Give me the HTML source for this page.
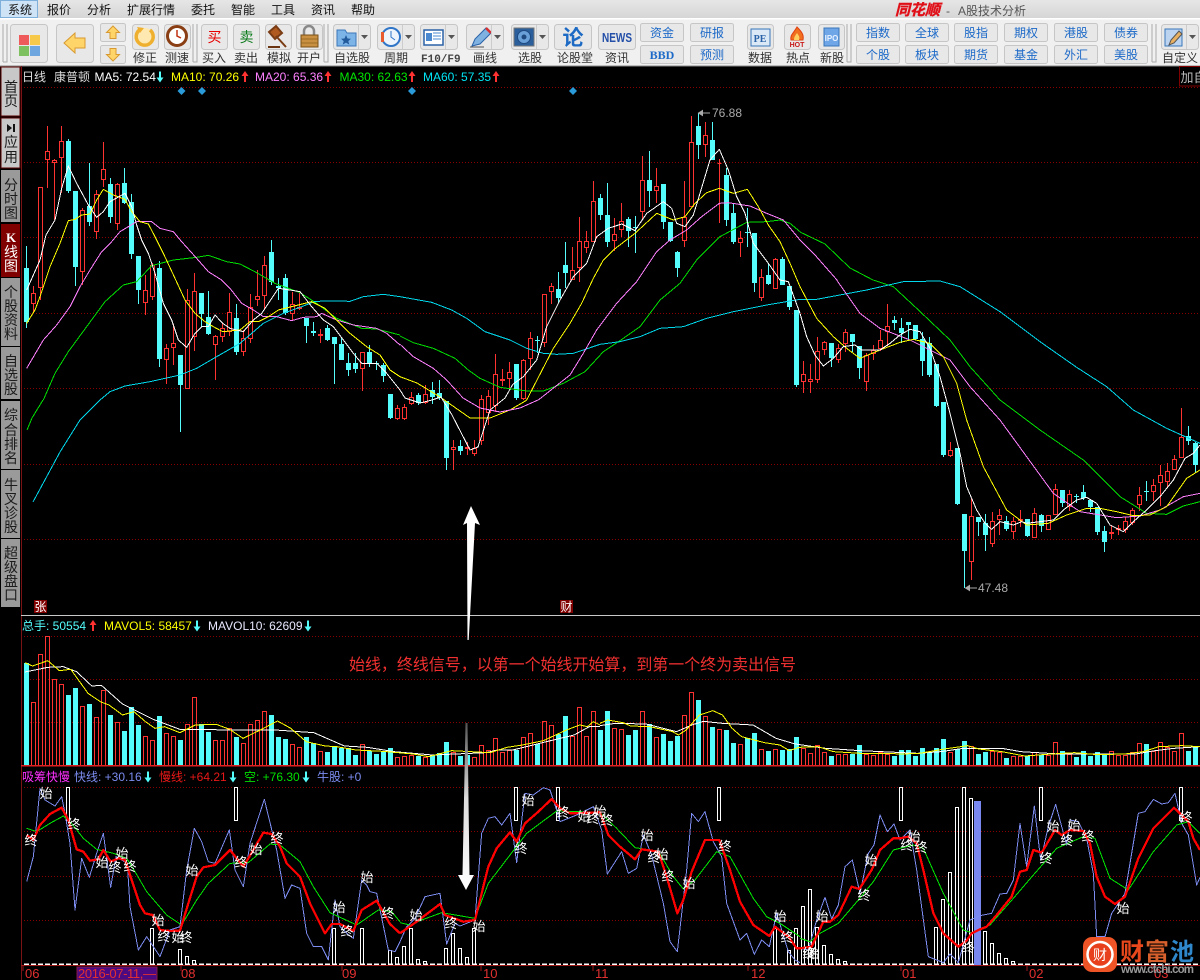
<!DOCTYPE html>
<html lang="zh"><head><meta charset="utf-8"><title>A股技术分析</title>
<style>
html,body{margin:0;padding:0;background:#000;width:1200px;height:980px;overflow:hidden}
svg{display:block;font-family:"Liberation Sans","WenQuanYi Zen Hei","Noto Sans CJK SC",sans-serif;font-size:12px}
polyline{fill:none;vector-effect:non-scaling-stroke;stroke-width:1;stroke-linejoin:round;shape-rendering:crispEdges}
.b{fill:#e8e8e8;stroke:#c6c6c6}
.m{fill:#111}
.l{fill:#333}
.t{fill:#1c69c8;text-anchor:middle}
.s{fill:#1c1c1c;font-size:14px;text-anchor:middle}
.g{stroke:#8a0000;stroke-dasharray:1 2;fill:none}
.w{fill:#fff;font-size:13px;text-anchor:middle}
.x{fill:#e23030;font-size:13px}
.sep{fill:none;stroke:#aaa}
</style></head><body>
<svg width="1200" height="980" viewBox="0 0 1200 980" xmlns="http://www.w3.org/2000/svg">
<defs>
<linearGradient id="mb" x1="0" y1="0" x2="0" y2="1"><stop offset="0" stop-color="#e6e6e6"/><stop offset="1" stop-color="#d6d6d6"/></linearGradient>
<linearGradient id="ar" x1="0" y1="0" x2="0" y2="1"><stop offset="0" stop-color="#555"/><stop offset=".45" stop-color="#ddd"/><stop offset="1" stop-color="#fff"/></linearGradient>
</defs>
<rect width="1200" height="980" fill="#000"/>
<!-- menu -->
<rect width="1200" height="18" fill="url(#mb)"/>
<rect y="18" width="1200" height="1.5" fill="#fff"/>
<rect y="19.5" width="1200" height="47" fill="#f0f0f0"/>
<rect y="65.5" width="1200" height="1" fill="#888"/>
<rect x=".5" y=".5" width="37" height="17" fill="#cfe3f6" stroke="#7fb0dc"/>
<g class="m">
<text class="m" x="8" y="14">系统</text><text class="m" x="47" y="14">报价</text><text class="m" x="87" y="14">分析</text><text class="m" x="127" y="14">扩展行情</text><text class="m" x="191" y="14">委托</text><text class="m" x="231" y="14">智能</text><text class="m" x="271" y="14">工具</text><text class="m" x="311" y="14">资讯</text><text class="m" x="351" y="14">帮助</text>
</g>
<text x="895" y="15" font-size="15" font-weight="bold" font-style="italic" fill="#e01018" stroke="#e01018" stroke-width=".4">同花顺</text>
<text x="946" y="15" fill="#555">-</text><text x="958" y="15" fill="#555">A股技术分析</text>
<!-- separators -->
<path class="sep" d="M3 24V62M7 24V62H3M193 24V62M197 24V62H193M324 24V62M328 24V62H324M847 24V62M851 24V62H847M1152 24V62M1156 24V62H1152"/>
<!-- toolbar buttons -->
<rect class="b" x="10.5" y="24.5" width="37" height="38" rx="3"/><rect x="19" y="35" width="10" height="10" fill="#ef5a5a"/><rect x="30" y="35" width="10" height="10" fill="#f7c94a"/><rect x="19" y="46" width="10" height="10" fill="#7cc060"/><rect x="30" y="46" width="10" height="10" fill="#6ea6e0"/>
<rect class="b" x="56.5" y="24.5" width="37" height="38" rx="3"/><path d="M64 43L75 33V38H85V48H75V53Z" fill="#ffd468" stroke="#d89a30"/>
<rect class="b" x="100.5" y="23.5" width="25" height="18" rx="2"/><path d="M113 26l6.500 6.500h-3.500v6h-6v-6h-3.500z" fill="#ffd468" stroke="#d89a30"/>
<rect class="b" x="100.500" y="45.500" width="25" height="18" rx="2"/><path d="M113 61l6.500-6.500h-3.500v-6h-6v6h-3.500z" fill="#ffd468" stroke="#d89a30"/>
<rect class="b" x="132.500" y="24.500" width="26" height="25" rx="3"/><circle cx="145" cy="37" r="9" fill="#ffe9b0"/><path d="M141 29a8.500 8.500 0 1 0 9 1" fill="none" stroke="#efb030" stroke-width="3.500"/><path d="M137 27l7 1-4 5z" fill="#efb030"/>
<text class="l" x="133" y="62">修正</text>
<rect class="b" x="164.500" y="24.500" width="26" height="25" rx="3"/><circle cx="177" cy="36" r="9.500" fill="#fff" stroke="#8a3e14" stroke-width="3"/><path d="M177 30v6l4 2" fill="none" stroke="#c03010" stroke-width="1.500"/>
<text class="l" x="165" y="62">测速</text>
<rect class="b" x="201.500" y="24.500" width="26" height="25" rx="3"/><text x="214.500" y="42" font-size="14" fill="#e80000" text-anchor="middle">买</text>
<text class="l" x="202" y="62">买入</text>
<rect class="b" x="233.500" y="24.500" width="26" height="25" rx="3"/><text x="246.500" y="42" font-size="14" fill="#0a7a1a" text-anchor="middle">卖</text>
<text class="l" x="234" y="62">卖出</text>
<rect class="b" x="265.500" y="24.500" width="26" height="25" rx="3"/><path d="M269 32l7-6 6 7-7 6zM276 36l10 11" fill="#b05a20" stroke="#7a3c14" stroke-width="2"/><path d="M268 47h12" stroke="#6a3410" stroke-width="2"/>
<text class="l" x="267" y="62">模拟</text>
<rect class="b" x="296.500" y="24.500" width="26" height="25" rx="3"/><path d="M304 35v-4a5 5 0 0 1 10 0v4" fill="none" stroke="#888" stroke-width="2.500"/><rect x="301" y="35" width="17" height="12" fill="#c89040" stroke="#7a5018"/><path d="M301 39h17M301 43h17" stroke="#8a6020" stroke-width=".7"/>
<text class="l" x="297" y="62">开户</text>
<rect class="b" x="333.500" y="24.500" width="37" height="25" rx="3"/><path d="M337 30h8l2 3h9v13h-19z" fill="#7db4e8" stroke="#3a76b8"/><path d="M346 35l1.500 3.500 3.500.3-2.700 2.300 1 3.500-3.300-2-3.300 2 1-3.500-2.700-2.300 3.500-.3z" fill="#235a9c"/><path d="M358.500 25v24" stroke="#ccc"/><path d="M361 35h7l-3.500 4z" fill="#555"/>
<text class="l" x="334" y="62">自选股</text>
<rect class="b" x="377.500" y="24.500" width="37" height="25" rx="3"/><circle cx="391" cy="37" r="9" fill="#eef4fc" stroke="#2f75c8" stroke-width="2"/><path d="M391 31v6l4 3" fill="none" stroke="#2f75c8"/><rect x="381" y="32" width="3" height="10" fill="#e85a30"/><path d="M402.500 25v24" stroke="#ccc"/><path d="M405 35h7l-3.500 4z" fill="#555"/>
<text class="l" x="384" y="62">周期</text>
<rect class="b" x="420.500" y="24.500" width="37" height="25" rx="3"/><rect x="424" y="30" width="19" height="15" fill="#fff" stroke="#2a62a8" stroke-width="1.500"/><rect x="426" y="33" width="6" height="8" fill="#4a88d0"/><path d="M433 33h8M433 36h8M433 39h8" stroke="#4a88d0"/><path d="M445.500 25v24" stroke="#ccc"/><path d="M448 35h7l-3.500 4z" fill="#555"/>
<text x="421" y="62" font-family="'Liberation Mono',monospace" font-weight="bold" font-size="11" fill="#444">F10/F9</text>
<rect class="b" x="466.500" y="24.500" width="37" height="25" rx="3"/><path d="M472 46l3-7 11-11 5 5-11 11z" fill="#7fb2e0" stroke="#2a62a8"/><path d="M486 28l5 5" stroke="#d83030" stroke-width="2.500"/><path d="M470 47h14" stroke="#555"/><path d="M491.500 25v24" stroke="#ccc"/><path d="M494 35h7l-3.500 4z" fill="#555"/>
<text class="l" x="473" y="62">画线</text>
<rect class="b" x="511.500" y="24.500" width="37" height="25" rx="3"/><rect x="514" y="28" width="20" height="18" fill="#2a5f9c" stroke="#777"/><circle cx="524" cy="37" r="6.500" fill="#6aa0d8" stroke="#1f4a80"/><circle cx="524" cy="37" r="2.500" fill="#1f4a80"/><path d="M536.500 25v24" stroke="#ccc"/><path d="M539 35h7l-3.500 4z" fill="#555"/>
<text class="l" x="518" y="62">选股</text>
<rect class="b" x="554.500" y="24.500" width="37" height="25" rx="3"/><text x="573" y="45" font-size="21" font-weight="bold" fill="#1c6ac4" text-anchor="middle">论</text>
<text class="l" x="557" y="62">论股堂</text>
<rect class="b" x="598.500" y="24.500" width="37" height="25" rx="3"/><text x="617" y="42" font-size="13" font-weight="bold" fill="#234fa8" text-anchor="middle" textLength="30" lengthAdjust="spacingAndGlyphs">NEWS</text>
<text class="l" x="605" y="62">资讯</text>
<rect class="b" x="640.500" y="23.500" width="43" height="18" rx="2"/><text class="t" x="662" y="37">资金</text>
<rect class="b" x="640.500" y="45.500" width="43" height="18" rx="2"/><text class="t" x="662" y="59" font-family="'Liberation Serif',serif" font-weight="bold">BBD</text>
<rect class="b" x="690.500" y="23.500" width="43" height="18" rx="2"/><text class="t" x="712" y="37">研报</text>
<rect class="b" x="690.500" y="45.500" width="43" height="18" rx="2"/><text class="t" x="712" y="59">预测</text>
<rect class="b" x="747.500" y="24.500" width="26" height="25" rx="3"/><rect x="751" y="29" width="19" height="17" fill="#dbe8f6" stroke="#3a76b8"/><text x="760" y="42" font-size="10" font-weight="bold" font-family="'Liberation Serif',serif" fill="#2a62a8" text-anchor="middle">PE</text>
<text class="l" x="748" y="62">数据</text>
<rect class="b" x="784.500" y="24.500" width="26" height="25" rx="3"/><path d="M797 27c5 5 7 8 6 13h-12c-1-5 2-6 6-13z" fill="#f07020" stroke="#e04010"/><path d="M797 33c2 3 3 4 2 7h-5c0-3 1-4 3-7z" fill="#ffd060"/><text x="797" y="47" font-size="7" font-weight="bold" fill="#c81818" text-anchor="middle">HOT</text>
<text class="l" x="786" y="62">热点</text>
<rect class="b" x="818.500" y="24.500" width="26" height="25" rx="3"/><rect x="824" y="28" width="15" height="18" fill="#6ea6e8" stroke="#3a76b8"/><text x="831.500" y="41" font-size="8" font-weight="bold" fill="#e8f2ff" text-anchor="middle">IPO</text>
<text class="l" x="820" y="62">新股</text>
<rect class="b" x="856.500" y="23.500" width="43" height="18" rx="2"/><text class="t" x="878" y="37">指数</text><rect class="b" x="856.500" y="45.500" width="43" height="18" rx="2"/><text class="t" x="878" y="59">个股</text>
<rect class="b" x="905.500" y="23.500" width="43" height="18" rx="2"/><text class="t" x="927" y="37">全球</text><rect class="b" x="905.500" y="45.500" width="43" height="18" rx="2"/><text class="t" x="927" y="59">板块</text>
<rect class="b" x="954.500" y="23.500" width="43" height="18" rx="2"/><text class="t" x="976" y="37">股指</text><rect class="b" x="954.500" y="45.500" width="43" height="18" rx="2"/><text class="t" x="976" y="59">期货</text>
<rect class="b" x="1004.500" y="23.500" width="43" height="18" rx="2"/><text class="t" x="1026" y="37">期权</text><rect class="b" x="1004.500" y="45.500" width="43" height="18" rx="2"/><text class="t" x="1026" y="59">基金</text>
<rect class="b" x="1054.500" y="23.500" width="43" height="18" rx="2"/><text class="t" x="1076" y="37">港股</text><rect class="b" x="1054.500" y="45.500" width="43" height="18" rx="2"/><text class="t" x="1076" y="59">外汇</text>
<rect class="b" x="1104.500" y="23.500" width="43" height="18" rx="2"/><text class="t" x="1126" y="37">债券</text><rect class="b" x="1104.500" y="45.500" width="43" height="18" rx="2"/><text class="t" x="1126" y="59">美股</text>
<rect class="b" x="1161.500" y="24.500" width="37" height="25" rx="3"/><rect x="1165" y="29" width="17" height="17" fill="#bcd4f0" stroke="#3a76b8"/><path d="M1169 45l2-5 8-9 3 3-8 9z" fill="#e8b060" stroke="#555"/><path d="M1186.500 25v24" stroke="#ccc"/><path d="M1189 35h7l-3.500 4z" fill="#555"/>
<text class="l" x="1162" y="62">自定义</text>
<!-- sidebar -->
<rect x="21" y="66" width="1" height="914" fill="#7a1414"/>
<g stroke="#5a0000">
<rect x="1" y="67" width="19" height="49" fill="#c8c8c8"/><rect x="1" y="118" width="19" height="50" fill="#c8c8c8"/></g>
<rect x="1" y="170" width="19" height="52" fill="#9a9a9a"/>
<rect x="1" y="224" width="19" height="53" fill="#800000"/>
<rect x="1" y="278" width="19" height="68" fill="#9a9a9a"/>
<rect x="1" y="347" width="19" height="52" fill="#9a9a9a"/>
<rect x="1" y="401" width="19" height="68" fill="#9a9a9a"/>
<rect x="1" y="470" width="19" height="68" fill="#9a9a9a"/>
<rect x="1" y="539" width="19" height="68" fill="#9a9a9a"/>
<text class="s" x="11" y="92">首</text><text class="s" x="11" y="106">页</text>
<path d="M7 124l5 4-5 4zM13 124h2v8h-2z" fill="#111"/>
<text class="s" x="11" y="147">应</text><text class="s" x="11" y="162">用</text>
<text class="s" x="11" y="190">分</text><text class="s" x="11" y="204">时</text><text class="s" x="11" y="218">图</text>
<text x="11" y="242" fill="#fff" font-size="13" font-weight="bold" font-family="'Liberation Serif',serif" text-anchor="middle">K</text><text class="s" style="fill:#fff" x="11" y="257">线</text><text class="s" style="fill:#fff" x="11" y="271">图</text>
<text class="s" x="11" y="297">个</text><text class="s" x="11" y="311">股</text><text class="s" x="11" y="325">资</text><text class="s" x="11" y="339">料</text>
<text class="s" x="11" y="366">自</text><text class="s" x="11" y="380">选</text><text class="s" x="11" y="394">股</text>
<text class="s" x="11" y="420">综</text><text class="s" x="11" y="435">合</text><text class="s" x="11" y="449">排</text><text class="s" x="11" y="463">名</text>
<text class="s" x="11" y="490">牛</text><text class="s" x="11" y="504">叉</text><text class="s" x="11" y="518">诊</text><text class="s" x="11" y="532">股</text>
<text class="s" x="11" y="558">超</text><text class="s" x="11" y="572">级</text><text class="s" x="11" y="586">盘</text><text class="s" x="11" y="600">口</text>
<!-- grid -->
<path class="g" d="M24 87.500H1200M24 162.500H1200M24 237.500H1200M24 313.500H1200M24 388.500H1200M24 464.500H1200M24 539.500H1200M24 636.500H1200M24 679.500H1200M24 722.500H1200M24 787.500H1200M24 831.500H1200M24 876.500H1200M24 920.500H1200"/>
<!-- K legend -->
<text x="22" y="81" fill="#ddd">日线</text><text x="54" y="81" fill="#ddd">康普顿</text>
<text x="94.500" y="81" fill="#fff">MA5: 72.54</text><text x="171" y="81" fill="#ffff00">MA10: 70.26</text><text x="255" y="81" fill="#ff80ff">MA20: 65.36</text><text x="339.500" y="81" fill="#00e800">MA30: 62.63</text><text x="423" y="81" fill="#00e4f4">MA60: 57.35</text>
<path d="M160 82.500l3.500-5h-2.500v-6h-2v6h-2.500z" fill="#54fcfc"/>
<path d="M245 71l3.500 5h-2.500v6h-2v-6h-2.500zM328 71l3.500 5h-2.500v6h-2v-6h-2.500zM412 71l3.500 5h-2.500v6h-2v-6h-2.500zM496 71l3.500 5h-2.500v6h-2v-6h-2.500z" fill="#ff3232"/>
<path d="M181.500 87l4 4-4 4-4-4zM202 87l4 4-4 4-4-4zM412 87l4 4-4 4-4-4zM573 87l4 4-4 4-4-4z" fill="#2a9ad8"/>
<rect x="1179.500" y="66.500" width="30" height="19.500" fill="#000" stroke="#800000"/><text x="1180.500" y="82" fill="#bbb" font-size="13">加自</text>
<!-- wicks -->
<g shape-rendering="crispEdges">
<path stroke="#54fcfc" fill="none" d="M26.500 246V328M68.500 139V193M75.500 191V286M89.500 163V226M110.500 178V223M124.500 168V204M131.500 194V259M138.500 256V304M159.500 261V367M180.500 355V432M201.500 293V327M208.500 291V335M236.500 304V355M271.500 240V285M278.500 278V300M285.500 274V315M306.500 318V343M313.500 322V336M327.500 325V341M334.500 337V384M341.500 337V360M348.500 353V376M355.500 353V373M369.500 345V367M376.500 361V370M383.500 363V382M390.500 394V419M418.500 393V405M432.500 382V404M439.500 380V400M446.500 401V470M460.500 440V455M516.500 364V400M537.500 336V353M558.500 272V303M565.500 242V288M600.500 194V220M607.500 183V247M628.500 217V247M635.500 216V253M649.500 151V207M663.500 184V229M670.500 222V242M677.500 251V277M698.500 113V159M712.500 122V160M726.500 168V226M733.500 203V244M747.500 208V247M754.500 233V292M768.500 263V285M782.500 257V285M789.500 286V310M796.500 310V387M831.500 343V367M852.500 334V352M859.500 346V379M894.500 316V330M901.500 318V343M908.500 322V339M915.500 325V340M922.500 332V376M929.500 337V377M936.500 364V407M943.500 402V457M957.500 448V505M964.500 514V588M978.500 517V536M985.500 514V551M1006.500 516V531M1027.500 519V537M1041.500 514V532M1062.500 490V507M1076.500 494V503M1083.500 485V500M1090.500 500V512M1097.500 507V535M1104.500 526V552M1146.500 481V501M1188.500 426V445M1195.500 442V473"/>
<path fill="#54fcfc" d="M24 268h5V322h-5zM66 141h5V191h-5zM73 191h5V267h-5zM87 206h5V222h-5zM108 184h5V217h-5zM122 183h5V203h-5zM129 202h5V254h-5zM136 256h5V290h-5zM157 268h5V359h-5zM178 355h5V385h-5zM199 293h5V314h-5zM206 317h5V334h-5zM234 318h5V352h-5zM269 252h5V282h-5zM276 286h5V288h-5zM283 278h5V313h-5zM304 318h5V326h-5zM311 331h5V333h-5zM325 328h5V340h-5zM332 337h5V344h-5zM339 344h5V360h-5zM346 363h5V370h-5zM353 363h5V369h-5zM367 352h5V363h-5zM374 363h5V364h-5zM381 365h5V376h-5zM388 394h5V418h-5zM416 395h5V403h-5zM430 390h5V397h-5zM437 393h5V398h-5zM444 401h5V458h-5zM458 446h5V451h-5zM514 364h5V398h-5zM535 340h5V341h-5zM556 289h5V298h-5zM563 265h5V273h-5zM598 198h5V215h-5zM605 215h5V242h-5zM626 219h5V231h-5zM633 227h5V228h-5zM647 180h5V191h-5zM661 184h5V222h-5zM668 222h5V241h-5zM675 252h5V268h-5zM696 126h5V145h-5zM710 140h5V160h-5zM724 175h5V220h-5zM731 213h5V242h-5zM745 232h5V233h-5zM752 233h5V283h-5zM766 275h5V284h-5zM780 259h5V285h-5zM787 286h5V307h-5zM794 310h5V385h-5zM829 343h5V358h-5zM850 334h5V342h-5zM857 346h5V368h-5zM892 320h5V323h-5zM899 328h5V333h-5zM906 322h5V325h-5zM913 325h5V339h-5zM920 339h5V361h-5zM927 343h5V375h-5zM934 364h5V406h-5zM941 402h5V455h-5zM955 448h5V504h-5zM962 514h5V551h-5zM976 517h5V522h-5zM983 523h5V535h-5zM1004 521h5V529h-5zM1025 519h5V536h-5zM1039 515h5V526h-5zM1060 490h5V503h-5zM1074 496h5V497h-5zM1081 492h5V498h-5zM1088 500h5V507h-5zM1095 507h5V532h-5zM1102 531h5V542h-5zM1144 491h5V492h-5zM1186 436h5V441h-5zM1193 443h5V465h-5z"/>
<path stroke="#ff3232" fill="none" d="M33.500 286V313M40.500 187V300M47.500 126V188M54.500 159V220M61.500 126V193M82.500 208V285M96.500 190V239M103.500 142V187M117.500 183V230M145.500 275V315M152.500 263V300M166.500 344V384M173.500 324V365M187.500 289V388M194.500 273V351M215.500 335V380M222.500 323V342M229.500 293V336M243.500 330V356M250.500 294V343M257.500 270V306M264.500 256V310M292.500 292V320M299.500 293V310M320.500 329V343M362.500 352V391M397.500 405V420M404.500 404V420M411.500 392V405M425.500 385V404M453.500 440V470M467.500 442V455M474.500 440V456M481.500 395V445M488.500 390V425M495.500 354V412M502.500 369V386M509.500 362V390M523.500 359V400M530.500 332V370M544.500 294V347M551.500 283V304M572.500 247V280M579.500 217V282M586.500 231V253M593.500 181V241M614.500 218V251M621.500 203V237M642.500 156V220M656.500 168V203M684.500 181V247M691.500 116V207M705.500 122V157M719.500 159V223M740.500 231V257M761.500 269V301M775.500 258V288M803.500 361V393M810.500 364V393M817.500 337V383M824.500 341V355M838.500 344V363M845.500 329V352M866.500 353V391M873.500 345V360M880.500 330V351M887.500 304V346M950.500 442V457M971.500 498V580M992.500 512V547M999.500 509V535M1013.500 517V539M1020.500 510V527M1034.500 508V537M1048.500 515V530M1055.500 484V515M1069.500 490V511M1111.500 525V539M1118.500 525V535M1125.500 517V533M1132.500 508V525M1139.500 487V511M1153.500 479V501M1160.500 465V506M1167.500 463V487M1174.500 455V470M1181.500 408V458"/>
<path stroke="#ff3232" fill="#000" d="M31.500 293.500h4V303.500h-4zM38.500 187.500h4V287.500h-4zM45.500 151.500h4V159.500h-4zM52.500 160.500h4V162.500h-4zM59.500 141.500h4V157.500h-4zM80.500 210.500h4V271.500h-4zM94.500 194.500h4V231.500h-4zM101.500 169.500h4V179.500h-4zM115.500 184.500h4V223.500h-4zM143.500 290.500h4V302.500h-4zM150.500 265.500h4V296.500h-4zM164.500 348.500h4V359.500h-4zM171.500 343.500h4V347.500h-4zM185.500 300.500h4V388.500h-4zM192.500 291.500h4V336.500h-4zM213.500 336.500h4V344.500h-4zM220.500 328.500h4V336.500h-4zM227.500 312.500h4V331.500h-4zM241.500 338.500h4V351.500h-4zM248.500 307.500h4V338.500h-4zM255.500 296.500h4V299.500h-4zM262.500 265.500h4V295.500h-4zM290.500 304.500h4V313.500h-4zM297.500 307.500h4V308.500h-4zM318.500 334.500h4V335.500h-4zM360.500 352.500h4V368.500h-4zM395.500 408.500h4V418.500h-4zM402.500 407.500h4V418.500h-4zM409.500 397.500h4V403.500h-4zM423.500 394.500h4V402.500h-4zM451.500 447.500h4V449.500h-4zM465.500 447.500h4V448.500h-4zM472.500 448.500h4V453.500h-4zM479.500 399.500h4V440.500h-4zM486.500 396.500h4V412.500h-4zM493.500 374.500h4V405.500h-4zM500.500 379.500h4V380.500h-4zM507.500 372.500h4V378.500h-4zM521.500 360.500h4V398.500h-4zM528.500 338.500h4V358.500h-4zM542.500 294.500h4V342.500h-4zM549.500 286.500h4V291.500h-4zM570.500 270.500h4V279.500h-4zM577.500 241.500h4V267.500h-4zM584.500 241.500h4V247.500h-4zM591.500 201.500h4V241.500h-4zM612.500 234.500h4V240.500h-4zM619.500 221.500h4V229.500h-4zM640.500 180.500h4V211.500h-4zM654.500 186.500h4V190.500h-4zM682.500 217.500h4V240.500h-4zM689.500 142.500h4V206.500h-4zM703.500 135.500h4V144.500h-4zM717.500 163.500h4V163.500h-4zM738.500 238.500h4V242.500h-4zM759.500 277.500h4V297.500h-4zM773.500 259.500h4V288.500h-4zM801.500 374.500h4V381.500h-4zM808.500 379.500h4V381.500h-4zM815.500 351.500h4V379.500h-4zM822.500 342.500h4V349.500h-4zM836.500 348.500h4V359.500h-4zM843.500 332.500h4V343.500h-4zM864.500 355.500h4V381.500h-4zM871.500 350.500h4V353.500h-4zM878.500 340.500h4V348.500h-4zM885.500 326.500h4V331.500h-4zM948.500 450.500h4V455.500h-4zM969.500 516.500h4V561.500h-4zM990.500 521.500h4V543.500h-4zM997.500 515.500h4V519.500h-4zM1011.500 521.500h4V531.500h-4zM1018.500 519.500h4V520.500h-4zM1032.500 513.500h4V537.500h-4zM1046.500 515.500h4V529.500h-4zM1053.500 489.500h4V514.500h-4zM1067.500 494.500h4V506.500h-4zM1109.500 532.500h4V533.500h-4zM1116.500 528.500h4V529.500h-4zM1123.500 521.500h4V529.500h-4zM1130.500 510.500h4V522.500h-4zM1137.500 495.500h4V504.500h-4zM1151.500 485.500h4V491.500h-4zM1158.500 475.500h4V482.500h-4zM1165.500 471.500h4V481.500h-4zM1172.500 459.500h4V469.500h-4zM1179.500 437.500h4V457.500h-4z"/>
</g>
<!-- MAs: left -->
<g transform="translate(0,100) scale(.33333)">
<polyline stroke="#00dd00" points="130,900 165,820 205,755 260,680 315,605 370,555 410,545 455,497 520,480 590,472 625,466 680,485 720,492 770,518 825,550 900,578 950,610 1010,655 1085,685 1130,687 1200,705"/>
<polyline stroke="#00d8ec" points="300,900 330,875 375,858 450,845 540,825 590,805 650,770 720,730 790,670 850,640 905,620 945,604 1010,603 1050,604 1090,590 1150,583 1200,590"/>
<polyline stroke="#ff80ff" points="80,805 130,720 170,675 210,620 240,560 270,510 305,455 335,425 360,395 410,365 455,365 480,385 520,395 545,425 590,475 625,515 665,540 690,565 725,610 760,630 790,650 830,650 875,662 910,652 950,650 965,640 1010,660 1060,675 1130,685 1160,700 1200,735"/>
<polyline stroke="#ffff00" points="80,670 105,630 120,590 150,500 180,430 205,362 225,358 245,345 270,342 290,300 310,268 340,285 375,298 395,335 420,365 445,372 465,410 490,460 525,535 555,600 585,640 615,665 640,680 668,695 720,690 750,665 775,665 805,650 835,630 875,620 935,605 975,625 1010,660 1050,700 1100,740 1140,765 1170,810 1200,830"/>
<polyline stroke="#ffffff" points="80,570 120,480 138,405 165,360 185,265 205,198 230,250 265,315 290,352 310,335 330,305 375,280 395,320 410,375 425,420 445,460 465,520 490,610 515,660 535,720 560,742 585,700 605,680 625,680 645,645 668,670 690,685 730,695 760,660 785,640 805,610 835,565 870,570 900,575 935,620 970,660 1000,680 1030,720 1060,760 1085,790 1130,790 1160,820 1200,870"/>
</g>
<polyline stroke="#00dd00" points="27,430 32,418 43,400"/>
<polyline stroke="#00d8ec" points="33,502 60,452 80,420 100,400"/>
<polyline stroke="#ffff00" points="400,376.700 417,383 440,397 470,418 490,418 510,410 527,400"/>
<polyline stroke="#ffffff" points="400,390 405,398 420,403 432,400 441,397 452,415 470,450 478,447 490,410 505,398 513,384"/>
<polyline stroke="#ff80ff" points="463,398 480,408 500,412 520,408 538,400"/>
<polyline stroke="#ff80ff" points="800,240 815,255 837,280"/>
<polyline stroke="#00dd00" points="800,232 825,244 850,268 873,280"/>
<g transform="translate(400,100) scale(.33333)">
<polyline stroke="#00dd00" points="0,708 40,728 100,745 165,775 205,810 240,835 300,862 380,873 430,873 490,850 555,815 610,755 670,715 720,680 780,600 840,550 890,480 960,410 1040,367 1100,365 1140,360 1170,370 1200,395"/>
<polyline stroke="#00d8ec" points="0,590 95,607 155,630 200,655 255,695 330,720 380,745 430,760 470,763 520,760 600,733 660,725 720,710 780,685 850,680 920,655 1000,635 1100,615 1200,598"/>
<polyline stroke="#ff80ff" points="0,733 40,770 100,805 140,840 190,895"/>
<polyline stroke="#ff80ff" points="415,900 510,825 550,760 590,690 650,610 710,545 770,455 810,420 860,390 905,350 958,310 985,308 1050,318 1100,340 1150,360 1200,420"/>
<polyline stroke="#ffff00" points="380,900 460,745 510,670 545,610 580,535 610,480 640,450 705,400 770,340 820,360 855,350 885,310 920,278 958,265 1000,280 1042,268 1075,320 1105,375 1140,425 1170,490 1200,560"/>
<polyline stroke="#ffffff" points="340,852 370,830 410,780 440,680 480,600 520,530 560,490 590,410 625,385 665,372 705,392 740,340 790,305 815,325 830,370 855,380 880,345 900,280 930,180 958,148 985,210 1010,290 1035,340 1060,430 1105,490 1140,540 1165,545 1200,640"/>
</g>
<g transform="translate(800,280) scale(.33333)">
<polyline stroke="#00dd00" points="220,0 280,20 350,85 450,180 510,260 600,360 720,450 850,540 960,650 1040,700 1100,703 1150,678 1200,665"/>
<polyline stroke="#00d8ec" points="0,58 50,58 200,30 310,5 420,3 480,20 600,95 720,185 830,262 920,320 1000,390 1100,445 1200,490"/>
<polyline stroke="#ff80ff" points="110,0 180,100 240,145 330,180 400,215 450,240 510,320 600,420 680,530 760,640 840,695 950,713 1020,708 1080,690 1150,650 1200,640"/>
<polyline stroke="#ffff00" points="0,20 50,115 100,170 140,205 180,235 240,210 300,187 340,178 390,190 430,230 470,310 500,420 550,560 620,690 680,735 745,730 800,705 860,685 900,685 950,695 1000,707 1050,705 1100,680 1160,595 1200,570"/>
<polyline stroke="#ffffff" points="0,100 20,170 45,225 70,258 100,235 130,200 165,195 185,210 240,210 270,190 300,165 330,148 360,155 390,205 420,290 450,400 480,520 500,620 530,690 555,730 575,748 600,725 640,735 665,725 680,730 720,725 760,720 790,690 830,660 860,652 890,670 930,735 970,755 1000,725 1040,690 1080,650 1120,600 1155,535 1180,520 1200,495"/>
</g>
<path d="M710 113H700M698.500 113l4-2.500v5z" stroke="#aaa" fill="#aaa"/><text x="712" y="117" fill="#aaa">76.88</text>
<path d="M977 588H967M965.500 588l4-2.500v5z" stroke="#aaa" fill="#aaa"/><text x="978" y="592" fill="#aaa">47.48</text>
<rect x="34" y="600" width="13" height="13" fill="#800000"/><text x="40.500" y="611" font-size="12" fill="#fff" text-anchor="middle">张</text>
<rect x="560" y="600" width="13" height="13" fill="#800000"/><text x="566.500" y="611" font-size="12" fill="#fff" text-anchor="middle">财</text>
<rect x="21" y="615" width="1179" height="1" fill="#c8c8c8"/>
<!-- vol legend -->
<text x="22" y="630" fill="#54fcfc">总手: 50554</text><path d="M93 620l3.500 5h-2.500v6h-2v-6h-2.500z" fill="#ff3232"/>
<text x="104" y="630" fill="#ffff00">MAVOL5: 58457</text><path d="M197 631.500l3.500-5h-2.500v-6h-2v6h-2.500z" fill="#54fcfc"/>
<text x="208" y="630" fill="#e8e8ff">MAVOL10: 62609</text><path d="M308 631.500l3.500-5h-2.500v-6h-2v6h-2.500z" fill="#54fcfc"/>
<text x="349" y="670" font-size="16" fill="#f03030" textLength="447">始线，终线信号，以第一个始线开始算，到第一个终为卖出信号</text>
<!-- volume bars -->
<g shape-rendering="crispEdges">
<path fill="#54fcfc" d="M24 663h5V766h-5zM66 695h5V766h-5zM73 688h5V766h-5zM87 704h5V766h-5zM108 715h5V766h-5zM122 731h5V766h-5zM129 707h5V766h-5zM136 725h5V766h-5zM157 716h5V766h-5zM178 740h5V766h-5zM199 724h5V766h-5zM206 732h5V766h-5zM234 737h5V766h-5zM269 715h5V766h-5zM276 737h5V766h-5zM283 739h5V766h-5zM304 737h5V766h-5zM311 743h5V766h-5zM325 752h5V766h-5zM332 747h5V766h-5zM339 748h5V766h-5zM346 748h5V766h-5zM353 755h5V766h-5zM367 751h5V766h-5zM374 754h5V766h-5zM381 752h5V766h-5zM388 748h5V766h-5zM416 756h5V766h-5zM430 755h5V766h-5zM437 753h5V766h-5zM444 742h5V766h-5zM458 756h5V766h-5zM465 755h5V766h-5zM514 750h5V766h-5zM535 744h5V766h-5zM556 734h5V766h-5zM563 716h5V766h-5zM598 730h5V766h-5zM605 711h5V766h-5zM626 735h5V766h-5zM633 730h5V766h-5zM647 724h5V766h-5zM661 734h5V766h-5zM668 741h5V766h-5zM675 736h5V766h-5zM696 700h5V766h-5zM710 727h5V766h-5zM724 730h5V766h-5zM731 743h5V766h-5zM745 738h5V766h-5zM752 733h5V766h-5zM766 751h5V766h-5zM780 750h5V766h-5zM787 749h5V766h-5zM794 737h5V766h-5zM829 756h5V766h-5zM850 754h5V766h-5zM857 745h5V766h-5zM892 756h5V766h-5zM899 750h5V766h-5zM906 750h5V766h-5zM913 756h5V766h-5zM920 748h5V766h-5zM927 753h5V766h-5zM934 748h5V766h-5zM941 739h5V766h-5zM955 749h5V766h-5zM962 741h5V766h-5zM976 754h5V766h-5zM983 752h5V766h-5zM1004 758h5V766h-5zM1025 756h5V766h-5zM1039 755h5V766h-5zM1060 751h5V766h-5zM1074 757h5V766h-5zM1081 751h5V766h-5zM1088 756h5V766h-5zM1095 752h5V766h-5zM1102 754h5V766h-5zM1144 744h5V766h-5zM1186 751h5V766h-5zM1193 747h5V766h-5z"/>
<path fill="none" stroke="#ff3232" d="M31.500 702.500h4V766h-4zM38.500 654.500h4V766h-4zM45.500 636.500h4V766h-4zM52.500 679.500h4V766h-4zM59.500 684.500h4V766h-4zM80.500 706.500h4V766h-4zM94.500 717.500h4V766h-4zM101.500 690.500h4V766h-4zM115.500 722.500h4V766h-4zM143.500 736.500h4V766h-4zM150.500 740.500h4V766h-4zM164.500 733.500h4V766h-4zM171.500 736.500h4V766h-4zM185.500 724.500h4V766h-4zM192.500 697.500h4V766h-4zM213.500 740.500h4V766h-4zM220.500 740.500h4V766h-4zM227.500 728.500h4V766h-4zM241.500 743.500h4V766h-4zM248.500 724.500h4V766h-4zM255.500 720.500h4V766h-4zM262.500 711.500h4V766h-4zM290.500 744.500h4V766h-4zM297.500 747.500h4V766h-4zM318.500 751.500h4V766h-4zM360.500 744.500h4V766h-4zM395.500 757.500h4V766h-4zM402.500 756.500h4V766h-4zM409.500 755.500h4V766h-4zM423.500 757.500h4V766h-4zM451.500 752.500h4V766h-4zM472.500 757.500h4V766h-4zM479.500 745.500h4V766h-4zM486.500 750.500h4V766h-4zM493.500 738.500h4V766h-4zM500.500 752.500h4V766h-4zM507.500 750.500h4V766h-4zM521.500 737.500h4V766h-4zM528.500 733.500h4V766h-4zM542.500 721.500h4V766h-4zM549.500 725.500h4V766h-4zM570.500 736.500h4V766h-4zM577.500 707.500h4V766h-4zM584.500 736.500h4V766h-4zM591.500 711.500h4V766h-4zM612.500 728.500h4V766h-4zM619.500 729.500h4V766h-4zM640.500 711.500h4V766h-4zM654.500 737.500h4V766h-4zM682.500 715.500h4V766h-4zM689.500 692.500h4V766h-4zM703.500 716.500h4V766h-4zM717.500 729.500h4V766h-4zM738.500 744.500h4V766h-4zM759.500 749.500h4V766h-4zM773.500 749.500h4V766h-4zM801.500 748.500h4V766h-4zM808.500 753.500h4V766h-4zM815.500 745.500h4V766h-4zM822.500 752.500h4V766h-4zM836.500 754.500h4V766h-4zM843.500 754.500h4V766h-4zM864.500 754.500h4V766h-4zM871.500 755.500h4V766h-4zM878.500 752.500h4V766h-4zM885.500 754.500h4V766h-4zM948.500 752.500h4V766h-4zM969.500 746.500h4V766h-4zM990.500 751.500h4V766h-4zM997.500 752.500h4V766h-4zM1011.500 756.500h4V766h-4zM1018.500 756.500h4V766h-4zM1032.500 752.500h4V766h-4zM1046.500 755.500h4V766h-4zM1053.500 742.500h4V766h-4zM1067.500 754.500h4V766h-4zM1109.500 751.500h4V766h-4zM1116.500 755.500h4V766h-4zM1123.500 755.500h4V766h-4zM1130.500 752.500h4V766h-4zM1137.500 743.500h4V766h-4zM1151.500 751.500h4V766h-4zM1158.500 742.500h4V766h-4zM1165.500 747.500h4V766h-4zM1172.500 751.500h4V766h-4zM1179.500 733.500h4V766h-4z"/>
<rect x="21" y="765" width="1179" height="1.500" fill="#e02020"/>
</g>
<g transform="translate(0,610) scale(.3827,.33333)">
<polyline stroke="#ffffff" points="65,186 125,172 165,170 200,185 240,228 265,226 320,282 400,328 470,358 620,360 720,360 820,368 900,408 960,412 1030,425 1130,435 1270,428 1300,420 1340,420 1410,400 1500,375 1540,350 1568,350"/>
<polyline stroke="#ffff00" points="65,158 85,168 125,152 155,182 185,178 205,210 230,250 262,275 285,285 320,315 350,305 380,335 405,355 430,350 470,368 510,345 565,343 600,358 635,385 680,360 725,333 760,355 800,395 850,408 880,410 930,420 1000,424 1080,432 1120,440 1180,422 1280,428 1325,412 1365,405 1420,392 1480,360 1515,345 1535,350 1550,335 1568,345"/>
</g>
<g transform="translate(600,680) scale(.3827,.33333)">
<polyline stroke="#ffffff" points="0,137 40,130 120,132 200,155 240,135 270,124 320,130 400,135 460,175 510,192 590,205 680,212 830,220 890,215 950,205 1050,205 1100,215 1200,222 1400,222 1450,212 1500,205 1568,200"/>
<polyline stroke="#ffff00" points="0,130 20,120 60,128 80,138 130,140 190,155 205,165 225,150 260,105 295,92 320,105 345,145 370,170 430,188 470,195 495,212 520,202 570,200 610,215 680,220 740,220 790,222 835,220 900,207 960,197 990,207 1050,215 1110,228 1180,222 1240,218 1300,224 1370,222 1420,215 1460,200 1520,197 1568,200"/>
</g>
<!-- indicator legend -->
<text x="22" y="781" fill="#ff30ff">吸筹快慢</text>
<text x="74" y="781" fill="#7c8cf0">快线: +30.16</text><text x="159" y="781" fill="#e81818">慢线: +64.21</text><text x="244" y="781" fill="#00e000">空: +76.30</text><text x="317" y="781" fill="#7c8cf0">牛股: +0</text>
<path d="M148 782.500l3.500-5h-2.500v-6h-2v6h-2.500zM233 782.500l3.500-5h-2.500v-6h-2v6h-2.500zM306 782.500l3.500-5h-2.500v-6h-2v6h-2.500z" fill="#54fcfc"/>
<!-- indicator bars -->
<g shape-rendering="crispEdges">
<path fill="none" stroke="#fff" d="M66.500 787.500h3v33h-3zM234.500 787.500h3v33h-3zM514.500 787.500h3v33h-3zM556.500 787.500h3v33h-3zM717.500 787.500h3v33h-3zM899.500 787.500h3v33h-3zM1039.500 787.500h3v33h-3zM1179.500 787.500h3v33h-3zM150.500 928.500h3V964h-3zM178.500 949.500h3V964h-3zM185.500 956.500h3V964h-3zM192.500 960.500h3V964h-3zM332.500 928.500h3V964h-3zM360.500 928.500h3V964h-3zM388.500 950.500h3V964h-3zM395.500 957.500h3V964h-3zM402.500 946.500h3V964h-3zM409.500 928.500h3V964h-3zM416.500 959.500h3V964h-3zM423.500 961.500h3V964h-3zM444.500 948.500h3V964h-3zM451.500 933.500h3V964h-3zM458.500 948.500h3V964h-3zM465.500 957.500h3V964h-3zM472.500 928.500h3V964h-3zM773.500 928.500h3V964h-3zM787.500 950.500h3V964h-3zM794.500 928.500h3V964h-3zM801.500 906.500h3V964h-3zM808.500 889.500h3V964h-3zM815.500 927.500h3V964h-3zM822.500 945.500h3V964h-3zM829.500 954.500h3V964h-3zM836.500 959.500h3V964h-3zM843.500 961.500h3V964h-3zM934.500 927.500h3V964h-3zM941.500 899.500h3V964h-3zM948.500 872.500h3V964h-3zM955.500 807.500h3V964h-3zM962.500 787.500h3V964h-3zM969.500 798.500h3V964h-3zM983.500 931.500h3V964h-3zM990.500 943.500h3V964h-3zM997.500 953.500h3V964h-3zM1004.500 958.500h3V964h-3zM1011.500 961.500h3V964h-3z"/>
<path d="M24 964H1200" stroke="#fff" stroke-width="1.500" stroke-dasharray="5 2" fill="none"/>
<rect x="974" y="801" width="7" height="164" fill="#7888f0"/>
<rect x="21" y="965" width="1179" height="1" fill="#a01818"/>
</g>
<!-- indicator lines -->
<g transform="translate(0,770) scale(.33333)">
<polyline stroke="#7c8cf0" points="80,335 100,260 120,55 135,90 165,108 185,80 195,130 210,220 225,420 245,265 268,322 290,250 310,190 332,352 348,260 382,280 390,410 415,540 440,500 480,560 510,480 540,470 560,300 583,175 605,215 625,275 645,280 688,180 705,300 730,350 750,220 793,88 830,240 855,385 875,345 900,355 920,490 940,530 965,530 985,570 1005,390 1020,470 1040,490 1060,505 1085,330 1100,345 1110,365 1130,370 1165,540 1185,545 1200,515"/>
<polyline stroke="#00e800" points="80,175 110,185 150,160 190,138 215,160 250,205 290,238 340,250 380,265 405,305 440,365 500,435 545,465 590,390 625,340 690,280 745,278 810,222 840,225 900,275 940,350 990,428 1070,465 1135,420 1175,425 1200,455"/>
<polyline stroke="#ff0000" style="stroke-width:2.300" points="80,195 100,210 120,165 150,132 185,113 205,150 230,238 250,245 270,272 295,268 310,240 332,275 355,265 375,270 395,330 420,405 435,430 458,435 480,480 510,483 540,482 565,400 590,320 610,292 645,285 690,240 730,290 760,240 790,188 815,192 840,230 860,280 900,320 930,400 975,490 995,462 1020,462 1060,483 1085,420 1130,392 1170,462 1200,490"/>
</g>
<g transform="translate(400,770) scale(.33333)">
<polyline stroke="#7c8cf0" points="0,515 20,470 45,445 75,380 120,370 140,522 165,460 180,468 225,450 245,190 265,145 285,140 305,165 330,130 350,278 375,70 400,75 430,53 450,60 470,120 480,155 530,135 580,110 605,180 622,312 665,245 685,310 710,295 730,195 755,255 790,400 810,515 832,545 860,300 875,130 895,155 915,125 940,215 965,260 980,400 1020,510 1040,490 1063,553 1085,510 1108,530 1130,430 1165,545 1185,570 1200,578"/>
<polyline stroke="#00e800" points="0,458 30,465 65,450 125,428 225,445 265,340 330,255 380,190 470,123 600,127 650,175 705,233 775,243 820,320 850,357 885,330 950,245 990,260 1060,385 1100,440 1140,460 1200,500"/>
<polyline stroke="#ff0000" style="stroke-width:2.300" points="0,490 50,455 120,402 135,435 190,455 225,450 265,290 290,235 330,187 350,215 375,160 415,125 455,87 480,115 510,130 600,127 625,195 660,230 705,268 725,238 775,245 800,320 832,430 850,390 875,305 915,210 958,210 990,300 1020,395 1060,465 1108,498 1125,470 1165,500 1190,535 1200,535"/>
</g>
<g transform="translate(800,770) scale(.33333)">
<polyline stroke="#7c8cf0" points="0,535 25,540 50,450 75,382 95,447 115,405 135,290 157,270 180,370 205,250 222,225 240,135 262,185 282,162 300,210 330,180 350,300 385,560 430,578 450,552 475,578 510,450 540,437 575,430 600,372 620,370 640,330 660,160 680,290 703,108 722,270 745,170 767,103 800,225 810,150 835,155 860,205 880,310 890,500 915,500 935,430 975,370 1015,130 1035,125 1060,88 1085,102 1105,98 1125,70 1145,160 1165,195 1190,345 1200,322"/>
<polyline stroke="#00e800" points="0,505 30,515 60,490 115,460 175,390 220,335 280,240 340,225 370,235 430,370 490,480 520,490 570,465 640,385 700,315 770,235 850,200 885,205 930,325 985,360 1060,245 1130,165 1165,155 1200,190"/>
<polyline stroke="#ff0000" style="stroke-width:2.300" points="0,535 35,530 70,455 90,455 115,435 155,350 178,357 215,300 240,240 280,205 300,205 325,200 350,220 370,300 400,430 430,490 475,530 500,512 515,490 540,478 560,470 590,435 635,380 660,305 680,300 700,240 725,248 765,180 785,195 810,180 850,183 870,220 890,320 915,380 945,402 975,380 1015,265 1060,175 1090,145 1122,113 1165,155 1180,205 1200,240"/>
</g>
<!-- signals -->
<g class="w">
<text class="w" x="46" y="798">始</text><text class="w" x="74" y="829">终</text><text class="w" x="31" y="845">终</text><text class="w" x="102" y="867">始</text><text class="w" x="122" y="858">始</text><text class="w" x="115" y="872">终</text><text class="w" x="130" y="871">终</text><text class="w" x="158" y="925">始</text><text class="w" x="164" y="941">终</text><text class="w" x="178" y="942">始</text><text class="w" x="186" y="942">终</text><text class="w" x="192" y="875">始</text><text class="w" x="241" y="867">终</text><text class="w" x="256" y="854">始</text><text class="w" x="277" y="843">终</text><text class="w" x="339" y="912">始</text><text class="w" x="347" y="936">终</text><text class="w" x="367" y="882">始</text><text class="w" x="388" y="918">终</text>
<text class="w" x="416" y="920">始</text><text class="w" x="451" y="928">终</text><text class="w" x="479" y="931">始</text><text class="w" x="521" y="853">终</text><text class="w" x="528" y="805">始</text><text class="w" x="563" y="817">终</text><text class="w" x="584" y="821">始</text><text class="w" x="593" y="823">终</text><text class="w" x="600" y="816">始</text><text class="w" x="607" y="825">终</text><text class="w" x="647" y="840">始</text><text class="w" x="654" y="862">终</text><text class="w" x="662" y="859">始</text><text class="w" x="668" y="881">终</text><text class="w" x="689" y="888">始</text><text class="w" x="725" y="851">终</text><text class="w" x="780" y="921">始</text><text class="w" x="787" y="942">终</text>
<text class="w" x="809" y="958">终</text><text class="w" x="813" y="958">始</text><text class="w" x="822" y="921">始</text><text class="w" x="871" y="865">始</text><text class="w" x="864" y="900">终</text><text class="w" x="914" y="841">始</text><text class="w" x="907" y="850">终</text><text class="w" x="921" y="852">终</text><text class="w" x="968" y="952">终</text><text class="w" x="1053" y="831">始</text><text class="w" x="1046" y="863">终</text><text class="w" x="1074" y="830">始</text><text class="w" x="1067" y="845">终</text><text class="w" x="1088" y="841">终</text><text class="w" x="1123" y="913">始</text><text class="w" x="1186" y="822">终</text>
</g>
<!-- big arrows -->
<path d="M471 506L480 525 475 523 468.700 640H467.500L467 523 463 525Z" fill="#fff"/>
<path d="M465.500 723H467.500L469.500 875H474L466 890 458 875H462.500Z" fill="url(#ar)"/>
<!-- axis -->
<path d="M23 966v5M181 966v5M342 966v5M481 966v5M593 966v5M748 966v5M901 966v5M1027 966v5M1152 966v5" stroke="#a01818"/>
<rect x="77" y="967" width="80" height="13" fill="#4c0a82" stroke="#8a1a4a"/>
<text class="x" x="25" y="978">06</text><text class="x" x="78" y="978" textLength="78">2016-07-11,—</text><text class="x" x="181" y="978">08</text><text class="x" x="342" y="978">09</text><text class="x" x="483" y="978">10</text><text class="x" x="595" y="978">11</text><text class="x" x="751" y="978">12</text><text class="x" x="902" y="978">01</text><text class="x" x="1029" y="978">02</text><text class="x" x="1154" y="978">03</text>
<!-- watermark -->
<rect x="1083" y="937" width="34" height="35" rx="9" fill="#ee5426"/>
<circle cx="1100" cy="954.500" r="12.500" fill="#e8401c" stroke="#fff" stroke-width="2.500"/>
<text x="1100" y="960" font-size="14" fill="#fff" text-anchor="middle">财</text>
<text x="1120" y="960" font-size="24" font-weight="bold" fill="#e8481c">财</text><text x="1145" y="960" font-size="24" font-weight="bold" fill="#d8602c">富</text><text x="1170" y="960" font-size="24" font-weight="bold" fill="#2f88cc">池</text>
<text x="1121" y="973" font-size="11.500" font-weight="bold" fill="#999" textLength="73">www.ctchi.com</text>
</svg>
</body></html>
